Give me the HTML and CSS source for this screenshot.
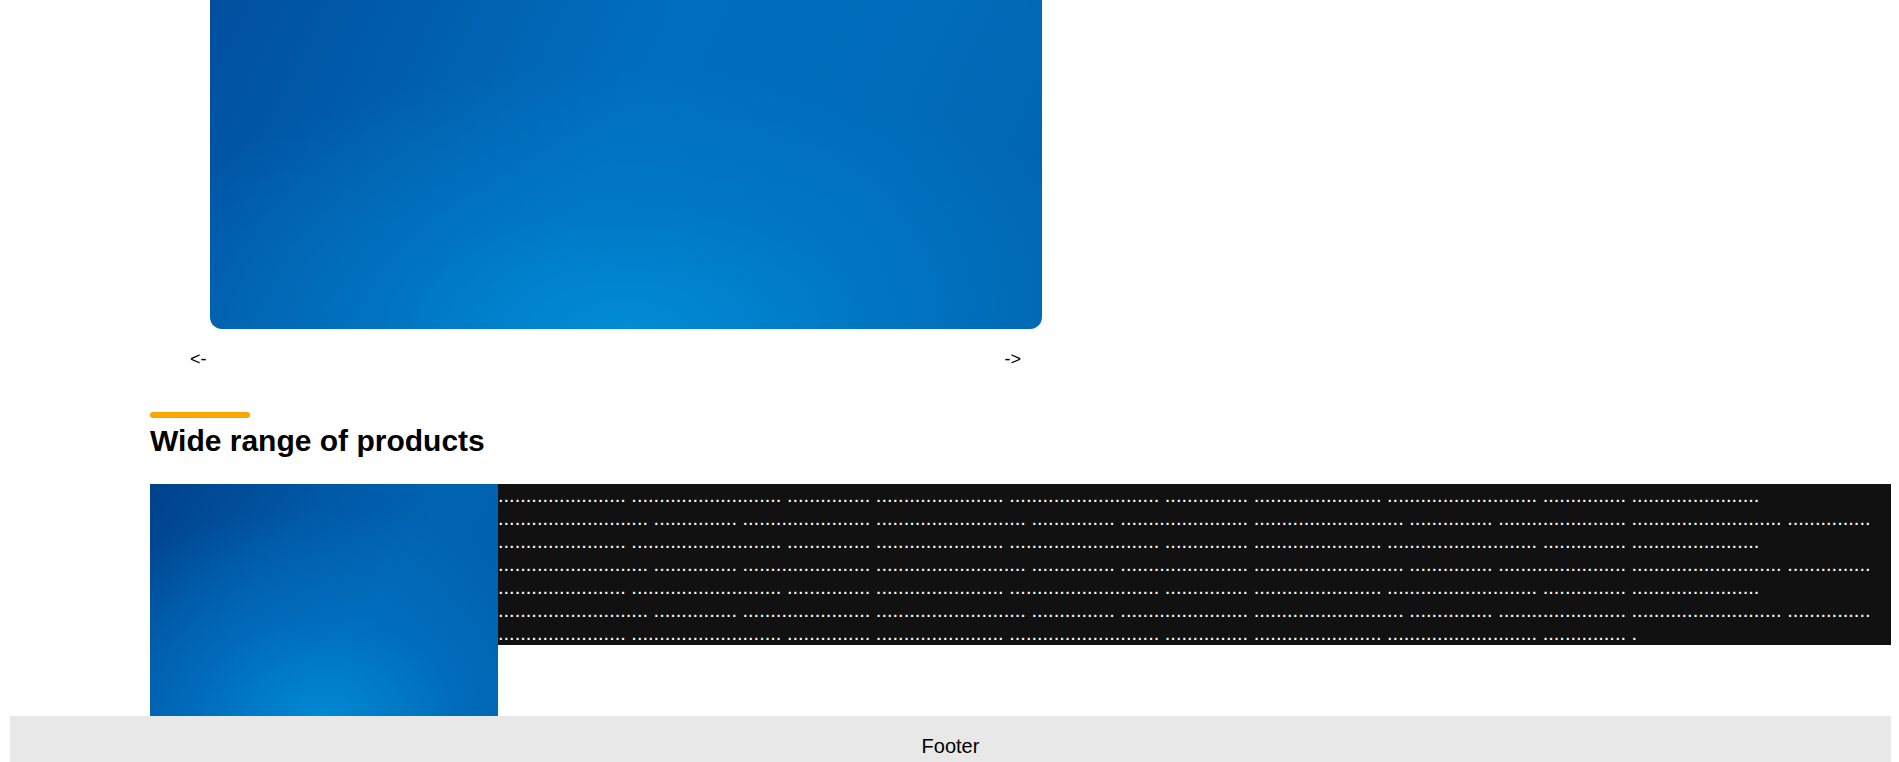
FILE: index.html
```html
<!DOCTYPE html>
<html lang="en">
<head>
<meta charset="utf-8">
<title>Products</title>
<link rel="stylesheet" href="styles.css">
</head>
<body>
<main class="page">
  <section class="carousel">
    <div class="slide"></div>
    <div class="controls">
      <button class="arrow" type="button">&lt;-</button>
      <button class="arrow" type="button">-&gt;</button>
    </div>
  </section>
  <section class="products">
    <div class="accent"></div>
    <h2 class="title">Wide range of products</h2>
    <div class="product-row">
      <div class="product-img"></div>
      <p class="product-text">....................... ........................... ............... ....................... ........................... ............... ....................... ........................... ............... ....................... ........................... ............... ....................... ........................... ............... ....................... ........................... ............... ....................... ........................... ............... ....................... ........................... ............... ....................... ........................... ............... ....................... ........................... ............... ....................... ........................... ............... ....................... ........................... ............... ....................... ........................... ............... ....................... ........................... ............... ....................... ........................... ............... ....................... ........................... ............... ....................... ........................... ............... ....................... ........................... ............... ....................... ........................... ............... ....................... ........................... ............... ....................... ........................... ............... ....................... ........................... ............... ....................... ........................... ............... ....................... ........................... ............... .</p>
    </div>
  </section>
</main>
<footer class="footer">Footer</footer>
</body>
</html>
```

FILE: styles.css
```css
html, body {
  background: #ffffff;
}

body {
  margin: 0 8px;
  font-family: "Liberation Sans", Arial, sans-serif;
  color: #000000;
}

.carousel {
  padding-left: 182px;
}

.slide {
  margin-left: 20px;
  width: 832px;
  height: 329px;
  border-radius: 0 0 12px 12px;
  background:
    radial-gradient(ellipse 65% 80% at 50% 100%, rgba(0, 140, 214, 1) 0%, rgba(0, 130, 206, 0.5) 45%, rgba(0, 120, 200, 0) 100%),
    linear-gradient(115deg, #004f9f 0%, #0062b0 28%, #006fbf 48%, #006cba 75%, #0063af 100%);
}

.controls {
  display: flex;
  justify-content: space-between;
  width: 831px;
  margin-top: 20px;
}

.arrow {
  background: none;
  border: 0;
  padding: 0;
  margin: 0;
  font-family: inherit;
  font-size: 18px;
  line-height: 21px;
  color: #000000;
  cursor: pointer;
}

.products {
  margin-left: 142px;
}

.accent {
  width: 100px;
  height: 6px;
  margin-top: 42px;
  border-radius: 3px;
  background: #ffa500;
}

.title {
  margin: 6px 0 26px;
  font-size: 30px;
  line-height: 34px;
  font-weight: 700;
}

.product-row {
  display: flex;
  align-items: flex-start;
}

.product-img {
  flex: none;
  width: 348px;
  height: 232px;
  background:
    radial-gradient(ellipse 85% 90% at 50% 100%, rgba(0, 136, 210, 1) 0%, rgba(0, 118, 198, 0.6) 45%, rgba(0, 110, 190, 0) 100%),
    linear-gradient(125deg, #00418b 0%, #0058a6 35%, #0064b2 60%, #005ca8 100%);
}

.product-text {
  flex: 1;
  margin: 0;
  background: #111111;
  color: #ffffff;
  font-size: 20px;
  line-height: 23px;
}

.footer {
  height: 23px;
  margin-left: 2px;
  padding: 19px 0 4px;
  background: #e8e8e8;
  text-align: center;
  font-size: 20px;
  line-height: 23px;
}
```
